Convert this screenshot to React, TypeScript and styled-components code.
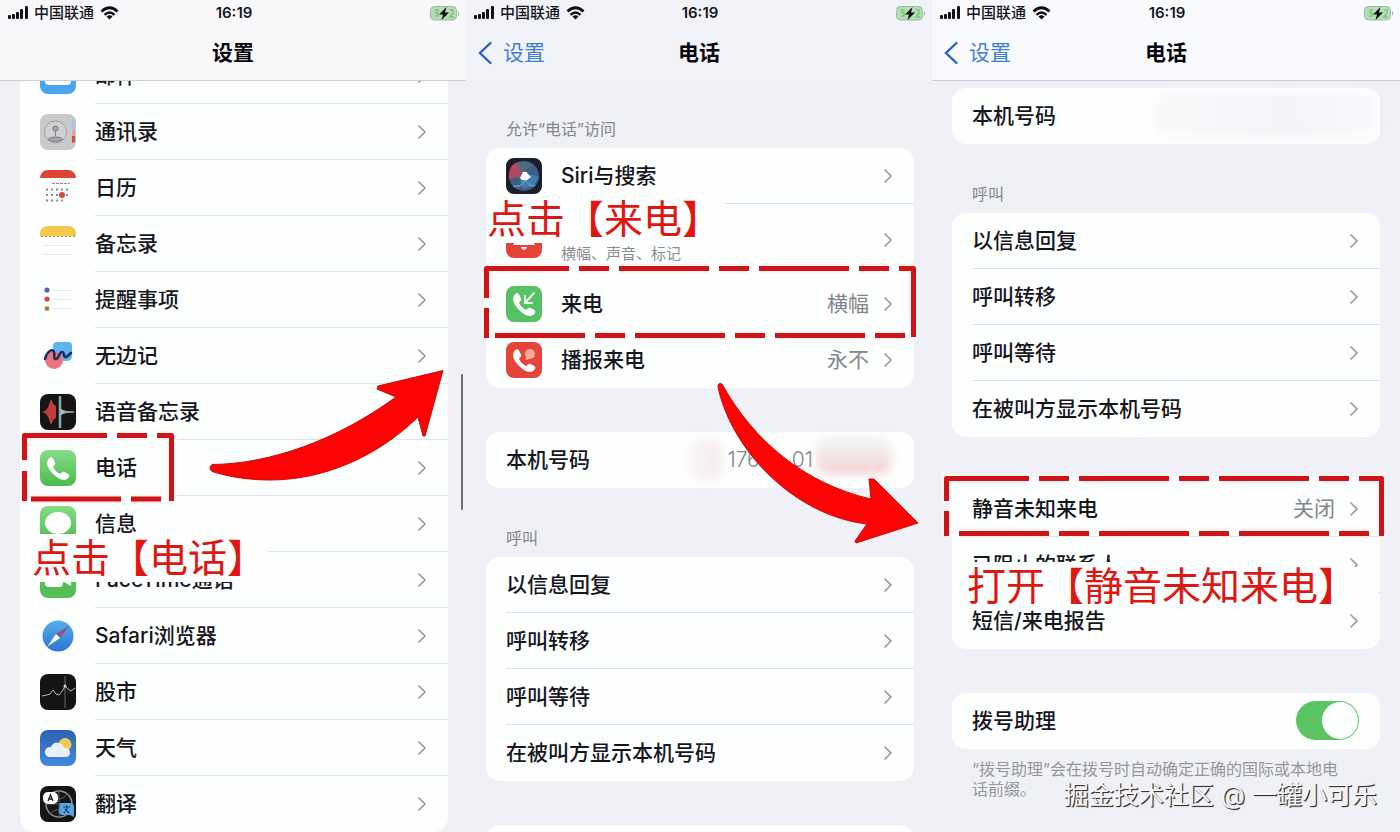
import React from "react";
import styled, { createGlobalStyle } from "styled-components";

const GlobalStyle = createGlobalStyle`
  *, *::before, *::after { box-sizing: border-box; }
  body {
    margin: 0;
    background: #f0f1f6;
    color: #16161f;
    font-family: Inter, "Noto Sans CJK SC", sans-serif;
    font-size: 21px;
  }
  button, input { font: inherit; color: inherit; }
`;

const Board = styled.main`
  display: grid;
  grid-template-columns: 466fr 466fr 468fr;
  height: 100vh;
  overflow: hidden;
`;

const Screen = styled.section`
  position: relative;
  display: flex;
  flex-direction: column;
  min-width: 0;
  overflow: hidden;
  background: #f0f1f6;
`;

const Header = styled.header<{ $tone: string; $line?: boolean }>`
  flex: none;
  height: 81px;
  background: ${(p) => p.$tone};
  border-bottom: 1px solid ${(p) => (p.$line ? "#cfd0d5" : "transparent")};
`;

const StatusBar = styled.div`
  display: grid;
  grid-template-columns: 1fr auto 1fr;
  align-items: center;
  height: 26px;
  padding: 0 6px 0 8px;
  font-size: 15px;
  line-height: 20px;
`;

const Carrier = styled.div`
  display: flex;
  align-items: center;
  gap: 6px;
  font-weight: 500;
`;

const Clock = styled.time`
  font-weight: 600;
`;

const BatterySlot = styled.div`
  display: flex;
  justify-content: flex-end;
`;

const NavBar = styled.nav`
  display: grid;
  grid-template-columns: 1fr auto 1fr;
  align-items: center;
  height: 54px;
  padding: 0 12px;
`;

const BackLink = styled.a`
  display: flex;
  align-items: center;
  gap: 10px;
  line-height: 28px;
  color: #3f7fd0;
  text-decoration: none;
`;

const Title = styled.h1`
  grid-column: 2;
  margin: 0;
  font-size: 21px;
  line-height: 28px;
  font-weight: 700;
  color: #08080c;
`;

const Body = styled.div<{ $top?: number; $right?: number }>`
  flex: 1;
  min-height: 0;
  overflow: hidden;
  padding: ${(p) => p.$top ?? 0}px ${(p) => p.$right ?? 18}px 0 20px;
`;

const Group = styled.section`
  & + & { margin-top: 44px; }
  &[data-labelled] { margin-top: 38px; }
  &[data-labelled]:first-child { margin-top: 0; }
`;

const GroupLabel = styled.h2`
  margin: 0 0 7px;
  padding-left: 20px;
  font-size: 16px;
  line-height: 24px;
  font-weight: 400;
  color: #85868d;
`;

const GroupNote = styled.p`
  margin: 10px 0 0;
  padding: 0 40px 0 20px;
  font-size: 16px;
  line-height: 20px;
  color: #96979e;
`;

const Card = styled.ul<{ $scrolled?: boolean }>`
  list-style: none;
  margin: ${(p) => (p.$scrolled ? "-33px" : "0")} 0 0;
  padding: 0;
  overflow: hidden;
  border-radius: 14px;
  background: #fdfefe;
`;

const rowLayout = `
  display: flex;
  align-items: center;
  gap: 19px;
  width: 100%;
  padding: 0 0 0 20px;
  border: 0;
  background: none;
  text-align: left;
`;

const RowButton = styled.button<{ $tall?: boolean }>`
  ${rowLayout}
  height: ${(p) => (p.$tall ? 72 : 56)}px;
  cursor: pointer;
`;

const RowBox = styled.div`
  ${rowLayout}
  height: 56px;
`;

const RowContent = styled.span`
  display: flex;
  flex: 1;
  align-items: center;
  align-self: stretch;
  min-width: 0;
  gap: 14px;
  padding-right: 21px;
  border-bottom: 1px solid #dfe2e6;
  li:last-child & { border-bottom-color: transparent; }
`;

const Texts = styled.span`
  display: flex;
  flex: 1;
  flex-direction: column;
`;

const Label = styled.span`
  line-height: 28px;
  font-weight: 500;
`;

const Caption = styled.span`
  font-size: 15px;
  line-height: 20px;
  color: #8b8c93;
`;

const Value = styled.span`
  line-height: 28px;
  color: #84858b;
`;

const NumberValue = styled.span`
  display: flex;
  gap: 32px;
  padding-right: 80px;
  line-height: 28px;
  color: #85838b;
  font-weight: 300;
`;

const Toggle = styled.input`
  appearance: none;
  flex: none;
  width: 63px;
  height: 39px;
  margin: 0;
  padding: 1px;
  border-radius: 20px;
  background: #5bc566;
  cursor: pointer;
  &::before {
    content: "";
    display: block;
    width: 36px;
    height: 37px;
    margin-left: 25px;
    border-radius: 50%;
    background: #fdfefe;
  }
`;

const Overlay = styled.svg`
  position: absolute;
  left: 0;
  top: 0;
  width: 466px;
  height: 832px;
  pointer-events: none;
`;

const Callout = styled.p<{ $x: number; $y: number; $w: number; $tail?: boolean }>`
  position: absolute;
  left: ${(p) => p.$x}px;
  top: ${(p) => p.$y}px;
  width: ${(p) => p.$w}px;
  height: 48px;
  margin: 0;
  background: #fdfefe;
  font-size: 39px;
  line-height: 48px;
  color: #df1713;
  white-space: nowrap;
  &::after {
    content: "";
    display: ${(p) => (p.$tail ? "block" : "none")};
    position: absolute;
    left: 100%;
    top: 5px;
    bottom: 0;
    width: 29px;
    background: #fdfefe;
  }
`;

const ScrollThumb = styled.span`
  position: absolute;
  right: 3px;
  top: 374px;
  width: 2px;
  height: 136px;
  border-radius: 1px;
  background: #6c6d73;
`;

const Smudge = styled.span<{ $x: number; $y: number; $w: number; $h: number; $fill: string }>`
  position: absolute;
  left: ${(p) => p.$x}px;
  top: ${(p) => p.$y}px;
  width: ${(p) => p.$w}px;
  height: ${(p) => p.$h}px;
  border-radius: 14px;
  background: ${(p) => p.$fill};
  filter: blur(4px);
`;

const Watermark = styled.p`
  position: absolute;
  right: 23px;
  bottom: 19px;
  margin: 0;
  font-size: 25px;
  line-height: 36px;
  color: #f7f7f9;
  text-shadow: 1px 1px 1px #303036, 1px 1px 0 #55555c;
  white-space: nowrap;
`;

const Tile = styled.svg`
  flex: none;
  width: 36px;
  height: 36px;
`;

const handset =
  "M9 8.5c1.7-1.6 3-1.6 4 .2l1.900 3.600c.7 1.300.3 2.300-1.200 3.500-.8.7-.6 1.300.2 2.600 1.300 2 2.700 3.400 4.700 4.700 1.200.8 1.900.9 2.600.1 1.200-1.500 2.200-1.800 3.500-1.100l3.400 2c1.700 1 1.700 2.300.1 3.900-2.700 2.800-6.500 2.500-11.300-.8-3-2.100-5.300-4.400-7.300-7.400C6.500 15.300 6.400 11.300 9 8.500Z";

const icons: Record<string, React.ReactNode> = {
  mail: (
    <>
      <rect width="36" height="36" rx="8" fill="#49a5ee" />
      <rect x="5" y="9" width="26" height="18" rx="4" fill="#fff" />
      <path d="m7 12 11 8 11-8" fill="none" stroke="#49a5ee" strokeWidth="1.500" />
    </>
  ),
  contacts: (
    <>
      <rect width="36" height="36" rx="8" fill="#c9c9ca" />
      <path d="M32 3q3 2 3 8v5h-3Z" fill="#a9c6e8" />
      <path d="M32 16h3v6h-3Z" fill="#e7a3a0" />
      <path d="M32 22h3v6l-3 1Z" fill="#d94b41" />
      <circle cx="15.500" cy="18" r="11" fill="#d2d2d3" stroke="#9d9ea3" />
      <circle cx="15.500" cy="14.500" r="2.600" fill="#a9aaaf" stroke="#77787e" />
      <path d="M15.500 17v5M8 25.500c1.500-2 4.500-2.500 7.500-2.500s6 .5 7.500 2.500q-3.500 2-7.500 2t-7.500-2Z" fill="#a5a6ab" stroke="#7c7d83" />
    </>
  ),
  calendar: (
    <>
      <path d="M0 8q1-8 8-8h20q7 0 8 8Z" fill="#e04334" />
      <path d="M12 13.500h18" stroke="#8b8b90" strokeDasharray="3 1" />
      <path d="M6 19.500h24M6 25h24M6 30.500h17" stroke="#8b8b90" strokeWidth="2" strokeDasharray="2 3" />
      <circle cx="22" cy="25" r="3" fill="#d6493c" />
    </>
  ),
  notes: (
    <>
      <path d="M0 10V7q1-7 8-7h20q7 0 8 7v3Z" fill="#f5c84c" />
      <path d="M1 10.500h34" stroke="#a58a3e" strokeDasharray="2 2" />
      <path d="M3 19.500h30M3 28.500h30" stroke="#e6e8ec" />
    </>
  ),
  reminders: (
    <>
      <circle cx="7" cy="8" r="2.600" fill="#4a67b5" />
      <circle cx="7" cy="17" r="2.600" fill="#d14646" />
      <circle cx="7" cy="26.500" r="2.600" fill="#d6aa62" />
      <path d="m5.500 25 3 3m0-3-3 3" stroke="#6b5638" />
      <path d="M13 8.500h20M13 17.500h20M13 26.500h20" stroke="#e4e6ea" />
    </>
  ),
  freeform: (
    <>
      <path d="M13 8q0-4 4-4h11q4 0 4 4v10q0 5-6 5-11 0-13-5Z" fill="#5db5ec" />
      <circle cx="14" cy="22" r="9" fill="#ea7480" />
      <path d="M5 21c2-8 8-11 9-7s-1 7 2 7 3-7 6-7 1 6 4 5 3-3 5-4" fill="none" stroke="#172f62" strokeWidth="2.600" strokeLinecap="round" />
    </>
  ),
  voice: (
    <>
      <rect width="36" height="36" rx="8" fill="#141416" />
      <path d="M2 18q5-1 7-7 2-8 3-4 1 4 4 5v12q-3 1-4 5-1 4-3-4-2-6-7-7Z" fill="#c33b3d" />
      <path d="M20 2v32" stroke="#8ea9b5" strokeWidth="2.500" />
      <path d="M21 15q2 3 13 3-11 0-13 3Z" fill="#b9c1c6" stroke="#a2abb0" />
    </>
  ),
  phone: (
    <>
      <rect width="36" height="36" rx="8" fill="url(#green)" />
      <path d={handset} fill="#fff" />
    </>
  ),
  messages: (
    <>
      <rect width="36" height="36" rx="8" fill="url(#green)" />
      <ellipse cx="18" cy="17" rx="13" ry="11" fill="#fff" />
    </>
  ),
  facetime: (
    <>
      <rect width="36" height="36" rx="8" fill="#55bf55" />
      <rect x="5" y="9" width="18" height="16" rx="4" fill="#fff" />
      <path d="m24 16 7-5v13l-7-4Z" fill="#fff" />
    </>
  ),
  safari: (
    <>
      <circle cx="18" cy="18" r="15.500" fill="url(#compass)" />
      <path d="M29.500 7.500 20 20l-4-4Z" fill="#8d5580" />
      <path d="m16 16 4 4L7.500 28.500Z" fill="#fff" />
    </>
  ),
  stocks: (
    <>
      <rect width="36" height="36" rx="8" fill="#141416" />
      <path d="M25 2v32" stroke="#6a6b6f" />
      <path d="m2 22 5-1 3-1 3-4 3 4 3 1 4-5 2-4 3 3 3 2 4-3" fill="none" stroke="#b7b8bb" />
      <circle cx="25" cy="12" r="1.500" fill="#cfd0d2" />
    </>
  ),
  weather: (
    <>
      <rect width="36" height="36" rx="8" fill="url(#sky)" />
      <circle cx="25" cy="14.500" r="6.500" fill="#f2cb55" />
      <path d="M10 27q-5 0-5-5t6-5q3-6 8-4 4 1 5 5 6 0 6 5 0 4-5 4Z" fill="#eaf0f8" />
    </>
  ),
  translate: (
    <>
      <rect width="36" height="36" rx="8" fill="#151518" />
      <circle cx="19" cy="18" r="13" fill="none" stroke="#8d9096" strokeWidth="1.500" />
      <path d="M19 5v26M6 18h26M10 8q8 10 18 0M10 28q8-9 18 0" fill="none" stroke="#5b5e64" />
      <rect x="3" y="6" width="15" height="12" rx="5" fill="#fff" />
      <path d="m8 15 2.500-6 2.500 6M9 13h3" fill="none" stroke="#1b1b1e" strokeWidth="1.300" />
      <path d="M20 17h10q4 0 4 4v10l-4-2h-8q-3 0-3-4Z" fill="#5aa3e0" />
      <path d="M23 21h7M26.500 19v2M24 27l4-6M29 27l-4-4" stroke="#1c4268" strokeWidth="1.200" />
    </>
  ),
  siri: (
    <>
      <rect width="36" height="36" rx="8" fill="#1c1f2b" />
      <circle cx="18" cy="18" r="15" fill="#3c5e86" />
      <path d="M18 18 3 21q-1-15 10-17 6 3 5 14Z" fill="#b3485a" />
      <path d="M10 7Q17 1 28 8q-8 1-11 8Z" fill="#4f6b7c" />
      <path d="M13 19q12-5 20 0-5 12-16 11Z" fill="#3d7eae" />
      <path d="M7 28q9 2 12-7 5 9 10 6" fill="none" stroke="#6d95aa" strokeWidth="1.500" />
      <path d="m14 20 3-6q4-1 5 2l3 3-4 3q-5 1-7-2Z" fill="#fff" />
    </>
  ),
  notice: (
    <>
      <rect width="36" height="36" rx="8" fill="#e5423a" />
      <path d="M7 23q3-3 3-7a8 8 0 0 1 16 0q0 4 3 7Z" fill="#fff" />
      <path d="M15 25h6q-1 3-3 3t-3-3Z" fill="#fff" />
    </>
  ),
  incoming: (
    <>
      <rect width="36" height="36" rx="8" fill="#57c264" />
      <path d={handset} fill="#fff" />
      <path d="m28 7-8 9M19 10v7h7" fill="none" stroke="#e8f8e4" strokeWidth="2" strokeLinecap="round" />
    </>
  ),
  announce: (
    <>
      <rect width="36" height="36" rx="8" fill="#e5443a" />
      <path d={handset} fill="#fff" />
      <circle cx="24" cy="12" r="5" fill="#f6aa9c" />
      <path d="m21 15-2 3 5-1Z" fill="#f6aa9c" />
    </>
  ),
};

const Gradients = () => (
  <defs>
    <linearGradient id="green" x2="0" y2="1">
      <stop stopColor="#86dc87" />
      <stop offset="1" stopColor="#4dbb4e" />
    </linearGradient>
    <linearGradient id="compass" x2="0" y2="1">
      <stop stopColor="#55aeeb" />
      <stop offset="1" stopColor="#2f74d6" />
    </linearGradient>
    <linearGradient id="sky" x2="0" y2="1">
      <stop stopColor="#2c62b5" />
      <stop offset="1" stopColor="#4389dd" />
    </linearGradient>
  </defs>
);

const Chevron = () => (
  <svg width="10" height="16" viewBox="0 0 10 16" fill="none" stroke="#97989d" strokeWidth="1.600" aria-hidden="true">
    <path d="m1.500 1.500 6.500 6.500-6.500 6.500" />
  </svg>
);

type RowProps = { icon?: string; label: string; caption?: string; value?: string };

const Row = ({ icon, label, caption, value }: RowProps) => (
  <li>
    <RowButton type="button" $tall={!!caption}>
      {icon && (
        <Tile viewBox="0 0 36 36" aria-hidden="true">
          {icons[icon]}
        </Tile>
      )}
      <RowContent>
        <Texts>
          <Label>{label}</Label>
          {caption && <Caption>{caption}</Caption>}
        </Texts>
        {value && <Value>{value}</Value>}
        <Chevron />
      </RowContent>
    </RowButton>
  </li>
);

const Status = () => (
  <StatusBar>
    <Carrier>
      <svg width="20" height="14" viewBox="0 0 20 14" fill="#111116" aria-hidden="true">
        <rect y="9" width="3" height="4" rx="1" />
        <rect x="4" y="8" width="3" height="5" rx="1" />
        <rect x="8" y="6" width="3" height="7" rx="1" />
        <rect x="12" y="3" width="3" height="10" rx="1" />
        <rect x="17" y="0" width="3" height="13" rx="1" />
      </svg>
      中国联通
      <svg width="19" height="14" viewBox="0 0 19 14" aria-hidden="true">
        <path d="M1.500 5.500q8-7.500 16 0" fill="none" stroke="#0c0c10" strokeWidth="2.800" />
        <path d="M4.500 8.800q5-4.500 10 0" fill="none" stroke="#0c0c10" strokeWidth="2.400" />
        <path d="m9.500 13.500-3-3q3-2.500 6 0Z" fill="#0c0c10" />
      </svg>
    </Carrier>
    <Clock>16:19</Clock>
    <BatterySlot>
      <svg width="30" height="15" viewBox="0 0 30 15" aria-hidden="true">
        <rect x=".5" y=".5" width="26" height="13.500" rx="4" fill="#b4dfb6" stroke="#a3b9a5" />
        <path d="M28 5q2 2 0 5Z" fill="#8fae92" />
        <path d="M9 4H6v3h2v3H5M20 4h3v3l-3 4h4" fill="none" stroke="#7cc681" strokeWidth="1.500" />
        <path d="M16.500 1 9 8.500h4l-1.500 5.500L19 6.500h-4Z" fill="#0e120e" />
      </svg>
    </BatterySlot>
  </StatusBar>
);

const TopBar = ({ title, back, tone, line }: { title: string; back?: string; tone: string; line?: boolean }) => (
  <Header $tone={tone} $line={line}>
    <Status />
    <NavBar>
      {back && (
        <BackLink href="#settings">
          <svg width="15" height="24" viewBox="0 0 15 24" fill="none" stroke="#2c62b8" strokeWidth="2.400" strokeLinecap="round" aria-hidden="true">
            <path d="M12.500 2 2 12l10.500 10" />
          </svg>
          {back}
        </BackLink>
      )}
      <Title>{title}</Title>
    </NavBar>
  </Header>
);

const Dash = ({ d }: { d: string }) => (
  <>
    <path d={d} fill="none" stroke="#fdf3f2" strokeWidth="9" />
    <path d={d} fill="none" stroke="#cd1519" strokeWidth="5" strokeLinejoin="round" />
  </>
);

const apps: RowProps[] = [
  { icon: "mail", label: "邮件" },
  { icon: "contacts", label: "通讯录" },
  { icon: "calendar", label: "日历" },
  { icon: "notes", label: "备忘录" },
  { icon: "reminders", label: "提醒事项" },
  { icon: "freeform", label: "无边记" },
  { icon: "voice", label: "语音备忘录" },
  { icon: "phone", label: "电话" },
  { icon: "messages", label: "信息" },
  { icon: "facetime", label: "FaceTime通话" },
  { icon: "safari", label: "Safari浏览器" },
  { icon: "stocks", label: "股市" },
  { icon: "weather", label: "天气" },
  { icon: "translate", label: "翻译" },
];

const access: RowProps[] = [
  { icon: "siri", label: "Siri与搜索" },
  { icon: "notice", label: "通知", caption: "横幅、声音、标记" },
  { icon: "incoming", label: "来电", value: "横幅" },
  { icon: "announce", label: "播报来电", value: "永不" },
];

const calling: RowProps[] = [
  { label: "以信息回复" },
  { label: "呼叫转移" },
  { label: "呼叫等待" },
  { label: "在被叫方显示本机号码" },
];

const blocking: RowProps[] = [
  { label: "静音未知来电", value: "关闭" },
  { label: "已阻止的联系人" },
  { label: "短信/来电报告" },
];

const Rows = ({ items }: { items: RowProps[] }) => (
  <>
    {items.map((item) => (
      <Row key={item.label} {...item} />
    ))}
  </>
);

const CallingGroup = () => (
  <Group data-labelled>
    <GroupLabel>呼叫</GroupLabel>
    <Card>
      <Rows items={calling} />
    </Card>
  </Group>
);

const SettingsScreen = () => (
  <Screen>
    <TopBar title="设置" tone="#f8f8fb" line />
    <Body>
      <Card $scrolled>
        <Rows items={apps} />
      </Card>
    </Body>
    <ScrollThumb />
    <Callout $x={32} $y={534} $w={236}>点击【电话】</Callout>
    <Overlay viewBox="0 0 466 832" aria-hidden="true">
      <Gradients />
      <path d="M27 436H171V498H27Z" fill="none" stroke="#fdfefe" strokeWidth="12" />
      <Dash d="M24.500 460V435.500H107M117 435.500h30M157 435.500h14.500V501M24.500 471v30M31 499h90M131 499h30" />
      <path
        d="M212 464.500C270 464 337 440 396 397L377 389 378 386 443 370.500 425 436H423L418 417C376 458 322 480 270 480 246 480 226 476 212 471.500Q208 468 212 464.500Z"
        fill="#fd0303"
        stroke="#c40d0d"
      />
    </Overlay>
  </Screen>
);

const PhoneScreen = () => (
  <Screen>
    <TopBar title="电话" back="设置" tone="#f2f3f8" />
    <Body $top={36}>
      <Group data-labelled>
        <GroupLabel>允许“电话”访问</GroupLabel>
        <Card>
          <Rows items={access} />
        </Card>
      </Group>
      <Group>
        <Card>
          <li>
            <RowBox>
              <RowContent>
                <Texts>
                  <Label>本机号码</Label>
                </Texts>
                <NumberValue>
                  <span>176</span>
                  <span>01</span>
                </NumberValue>
              </RowContent>
            </RowBox>
          </li>
        </Card>
      </Group>
      <CallingGroup />
      <Group>
        <Card>
          <li>
            <RowBox />
          </li>
        </Card>
      </Group>
    </Body>
    <Smudge $x={222} $y={440} $w={34} $h={40} $fill="linear-gradient(90deg, #f8f8fa, #f7e9ea)" />
    <Smudge $x={350} $y={438} $w={76} $h={36} $fill="linear-gradient(#f1efef 30%, #f6cfd2)" />
    <Callout $x={21} $y={195} $w={238}>点击【来电】</Callout>
    <Overlay viewBox="0 0 466 832" aria-hidden="true">
      <path d="M24 271H445V333H24Z" fill="none" stroke="#fdfefe" strokeWidth="10" />
      <Dash d="M20.500 298V268.500H103M113 268.500h30M153 268.500h90M253 268.500h30M293 268.500h90M393 268.500h30M433 268.500h14.500V337M20.500 308v30M29 335.500h90M129 335.500h30M169 335.500h90M269 335.500h30M309 335.500h90M409 335.500h30" />
      <path
        d="M252 387Q252 382 256 384C288 442 340 484 405 499L403 479H408L452 523 390 543 389 541 401 524C330 516 266 452 252 387Z"
        fill="#fd0303"
        stroke="#c40d0d"
      />
    </Overlay>
  </Screen>
);

const CallSettingsScreen = () => (
  <Screen>
    <TopBar title="电话" back="设置" tone="#f9fafd" line />
    <Body $top={7} $right={20}>
      <Group>
        <Card>
          <li>
            <RowBox>
              <RowContent>
                <Label>本机号码</Label>
              </RowContent>
            </RowBox>
          </li>
        </Card>
      </Group>
      <CallingGroup />
      <Group>
        <Card>
          <Rows items={blocking} />
        </Card>
      </Group>
      <Group>
        <Card>
          <li>
            <RowBox as="label">
              <RowContent>
                <Texts>
                  <Label>拨号助理</Label>
                </Texts>
                <Toggle type="checkbox" defaultChecked />
              </RowContent>
            </RowBox>
          </li>
        </Card>
        <GroupNote>“拨号助理”会在拨号时自动确定正确的国际或本地电话前缀。</GroupNote>
      </Group>
    </Body>
    <Smudge $x={222} $y={92} $w={222} $h={44} $fill="linear-gradient(90deg, #f9f9fb, #f3f4f8 60%, #f8f9fb)" />
    <Callout $x={35} $y={562} $w={382} $tail>打开【静音未知来电】</Callout>
    <Overlay viewBox="0 0 466 832" aria-hidden="true">
      <path d="M22 481H446V531H22Z" fill="none" stroke="#fdfefe" strokeWidth="8" />
      <Dash d="M14.500 501V478.500H97M107 478.500h30M147 478.500h90M247 478.500h30M287 478.500h90M387 478.500h30M427 478.500h22.500V536M14.500 511v25M27 533.500h90M127 533.500h30M167 533.500h90M267 533.500h30M307 533.500h90M407 533.500h30" />
    </Overlay>
    <Watermark>掘金技术社区 @ 一罐小可乐</Watermark>
  </Screen>
);

export default function App() {
  return (
    <>
      <GlobalStyle />
      <Board>
        <SettingsScreen />
        <PhoneScreen />
        <CallSettingsScreen />
      </Board>
    </>
  );
}
